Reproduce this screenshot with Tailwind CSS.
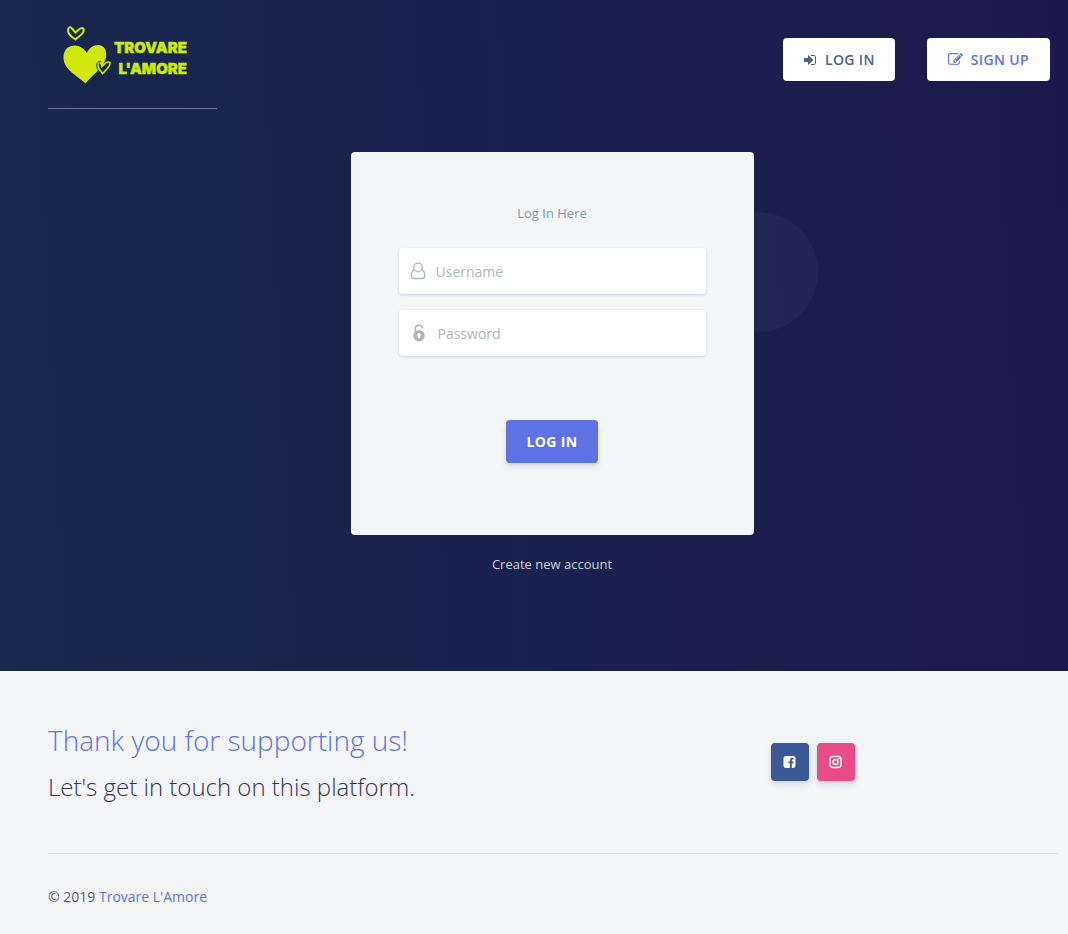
<!DOCTYPE html>
<html lang="en">
<head>
<meta charset="utf-8">
<meta name="viewport" content="width=device-width, initial-scale=1">
<title>Trovare L'Amore - Log In</title>
<script src="https://cdn.jsdelivr.net/npm/@tailwindcss/browser@4"></script>
</head>
<body class="min-h-screen bg-[#f4f5f7] font-['Open_Sans',sans-serif] text-[#525f7f]">
<div class="bg-[linear-gradient(87deg,#18284e_0%,#1a204e_60%,#1b194c_100%)] pb-[97px]">
  <header class="flex items-start justify-between pl-12 pr-[18px]">
    <a href="#" aria-label="Trovare L'Amore" class="block border-b border-[#7471a0]">
      <svg width="169" height="108" viewBox="0 0 169 108" fill="none">
        <path d="M37.500 83.500C30 76 15.500 70 15.500 57.500C15.500 49 21 45.500 27 45.500C32 45.500 36 49 39 53C41 48 45 45 50 45C56 45 59 50 58 57C57 67 45 74 37.500 83.500Z" fill="#d0e80c"/>
        <path d="M27.500 39.500C24 37 20 35 20 30.500C20 27 22.500 26.500 24 28.500L27.500 32.500L31 29.500C34 27 36.500 28 35.500 31.500C34.500 35 30 36.500 27.500 39.500Z" stroke="#d0e80c" stroke-width="2"/>
        <path d="M54.500 73.500C52.500 71 49.500 68.500 50 64C50.500 61.500 53 62 54 66.500C56.500 63.500 60 61 62 62.500C63 66 58 70 54.500 73.500Z" fill="#19254d" stroke="#d0e80c" stroke-width="1.600"/>
        <path d="M53.500 74.500C50.500 71 48 68 49 63.500C49.500 61.500 52 61 53.500 62" stroke="#19254d" stroke-width="1"/>
        <g fill="#d0e80c" stroke="#d0e80c" stroke-width=".4" stroke-linejoin="round" font-family="Inter, sans-serif" font-weight="900" font-size="15" text-anchor="end">
          <text x="139" y="53">TROVARE</text>
          <text x="139" y="74">L'AMORE</text>
        </g>
      </svg>
    </a>
    <nav class="flex gap-8 pt-[38px] text-sm font-semibold">
      <a href="#" class="flex h-[43px] items-center gap-2 rounded bg-white px-5 tracking-[0.35px] text-[#525f7f]">
        <svg class="size-[14px]" viewBox="0 0 1792 1792" fill="currentColor"><path d="M1312 896q0 26-19 45l-544 544q-19 19-45 19t-45-19-19-45v-288h-448q-26 0-45-19t-19-45v-384q0-26 19-45t45-19h448v-288q0-26 19-45t45-19 45 19l544 544q19 19 19 45zm352-352v704q0 119-84.500 203.500t-203.500 84.500h-320q-13 0-22.500-9.500t-9.500-22.500q0-4-1-20t-.5-26.500 3-23.500 10-19.500 20.500-6.500h320q66 0 113-47t47-113v-704q0-66-47-113t-113-47h-312l-11.500-1-11.500-3-8-5.500-7-9-2-13.500q0-4-1-20t-.5-26.500 3-23.500 10-19.500 20.500-6.500h320q119 0 203.500 84.500t84.500 203.500z"/></svg>
        LOG IN</a>
      <a href="#" class="flex h-[43px] items-center gap-2 rounded bg-white px-[21px] tracking-[0.35px] text-[#5e72e4]">
        <svg class="size-[15px]" viewBox="0 0 1792 1792" fill="currentColor"><path d="M888 1184l116-116-152-152-116 116v56h96v96h56zm440-720q-16-16-33 1l-350 350q-17 17-1 33t33-1l350-350q17-17 1-33zm80 594v190q0 119-84.500 203.500t-203.500 84.500h-832q-119 0-203.500-84.500t-84.500-203.500v-832q0-119 84.500-203.500t203.500-84.500h832q63 0 117 25 15 7 18 23 3 17-9 29l-49 49q-14 14-32 8-23-6-45-6h-832q-66 0-113 47t-47 113v832q0 66 47 113t113 47h832q66 0 113-47t47-113v-126q0-13 9-22l64-64q15-15 35-7t20 29zm-96-738l288 288-672 672h-288v-288zm444 132l-92 92-288-288 92-92q28-28 68-28t68 28l152 152q28 28 28 68t-28 68z"/></svg>
        SIGN UP</a>
    </nav>
  </header>
  <main class="pl-12 pr-3 pt-[43px]">
    <div class="relative mx-auto w-full max-w-[403px]">
      <div class="absolute -right-16 top-[60px] size-[120px] rounded-full bg-white/4"></div>
      <form class="relative flex flex-col items-center rounded bg-[#f4f5f7] px-12 pb-[72px] pt-[51px]">
        <h1 class="text-[13px] leading-5 text-[#8898aa]">Log In Here</h1>
        <label class="mt-[25px] flex h-[46px] w-full items-center gap-[9px] rounded bg-white px-[10px] text-[#adb5bd] shadow-[0_1px_3px_rgba(50,50,93,0.15),0_1px_0_rgba(0,0,0,0.02)]">
          <svg class="h-[18px] w-[18px]" viewBox="0 0 18 18" fill="none" stroke="currentColor" stroke-width="1.300"><circle cx="9" cy="5.500" r="4.300"/><path d="M5.500 8.200C3.500 8.600 2.200 11 2.200 13.500C2.200 15.800 3.200 16.500 4.500 16.500H13.500C14.800 16.500 15.800 15.800 15.800 13.500C15.800 11 14.500 8.600 12.500 8.200"/></svg>
          <input type="text" aria-label="Username" placeholder="Username" class="min-w-0 flex-1 pt-0.5 text-sm text-[#8898aa] outline-none placeholder:text-[#adb5bd]">
        </label>
        <label class="mt-4 flex h-[46px] w-full items-center gap-3 rounded bg-white px-[13px] text-[#adb5bd] shadow-[0_1px_3px_rgba(50,50,93,0.15),0_1px_0_rgba(0,0,0,0.02)]">
          <svg class="h-[18px] w-[14px]" viewBox="0 0 14 18" fill="none"><path d="M3.300 9V4.500C3.300 2 4.800 1.200 7 1.200C9 1.200 10.300 2.200 10.300 4.500" stroke="currentColor" stroke-width="1.500"/><circle cx="7" cy="11.700" r="5.700" fill="currentColor"/><circle cx="7" cy="11" r="1.900" fill="white"/><path d="M6 11.500H8V14H6Z" fill="white"/></svg>
          <input type="password" aria-label="Password" placeholder="Password" class="min-w-0 flex-1 pt-0.5 text-sm text-[#8898aa] outline-none placeholder:text-[#adb5bd]">
        </label>
        <button type="button" class="mt-16 h-[43px] rounded bg-[#5e72e4] px-[21px] text-sm font-bold tracking-[0.35px] text-white shadow-[0_4px_6px_rgba(50,50,93,0.11),0_1px_3px_rgba(0,0,0,0.08)]">LOG IN</button>
      </form>
      <div class="mt-[19px] text-center text-[13px] leading-5"><a href="#" class="text-[#ced4da]">Create new account</a></div>
    </div>
  </main>
</div>
<footer class="pl-12 pr-[10px] pt-[49px] pb-7">
  <div class="flex items-start">
    <div class="flex-1">
      <h2 class="text-[28px] font-light leading-10 text-[#5e72e4]">Thank you for supporting us!</h2>
      <p class="mt-[9px] text-2xl font-light leading-9 text-[#32325d]">Let's get in touch on this platform.</p>
    </div>
    <div class="flex w-[287px] gap-2 pt-[23px] text-white">
      <button type="button" aria-label="Facebook" class="grid size-[38px] place-items-center rounded bg-[#3b5999] shadow-[0_4px_6px_rgba(50,50,93,0.11),0_1px_3px_rgba(0,0,0,0.08)]"><svg class="size-[14px]" viewBox="64 0 1792 1792" fill="currentColor"><path d="M1376 128q119 0 203.500 84.500t84.500 203.500v960q0 119-84.500 203.500t-203.500 84.500h-188v-595h199l30-232h-229v-148q0-56 23.500-84t91.500-28l122-1v-207q-63-9-178-9-136 0-217.500 80t-81.500 226v171h-200v232h200v595h-532q-119 0-203.500-84.500t-84.500-203.500v-960q0-119 84.500-203.500t203.500-84.500h960z"/></svg></button>
      <button type="button" aria-label="Instagram" class="grid size-[38px] place-items-center rounded bg-[#ea4c89] shadow-[0_4px_6px_rgba(50,50,93,0.11),0_1px_3px_rgba(0,0,0,0.08)]"><svg class="size-[14px]" viewBox="0.500 0 14 14" fill="none" stroke="currentColor" stroke-width="1.400"><rect x="1.500" y="1.500" width="11" height="11" rx="3"/><circle cx="7" cy="7" r="2.500"/><circle cx="10.300" cy="3.800" r=".8" fill="currentColor" stroke="none"/></svg></button>
    </div>
  </div>
  <hr class="mt-12 border-[#dadce0]">
  <p class="mt-[31px] text-sm leading-6">© 2019 <a href="#" class="text-[#5e72e4]">Trovare L'Amore</a></p>
</footer>
</body>
</html>
